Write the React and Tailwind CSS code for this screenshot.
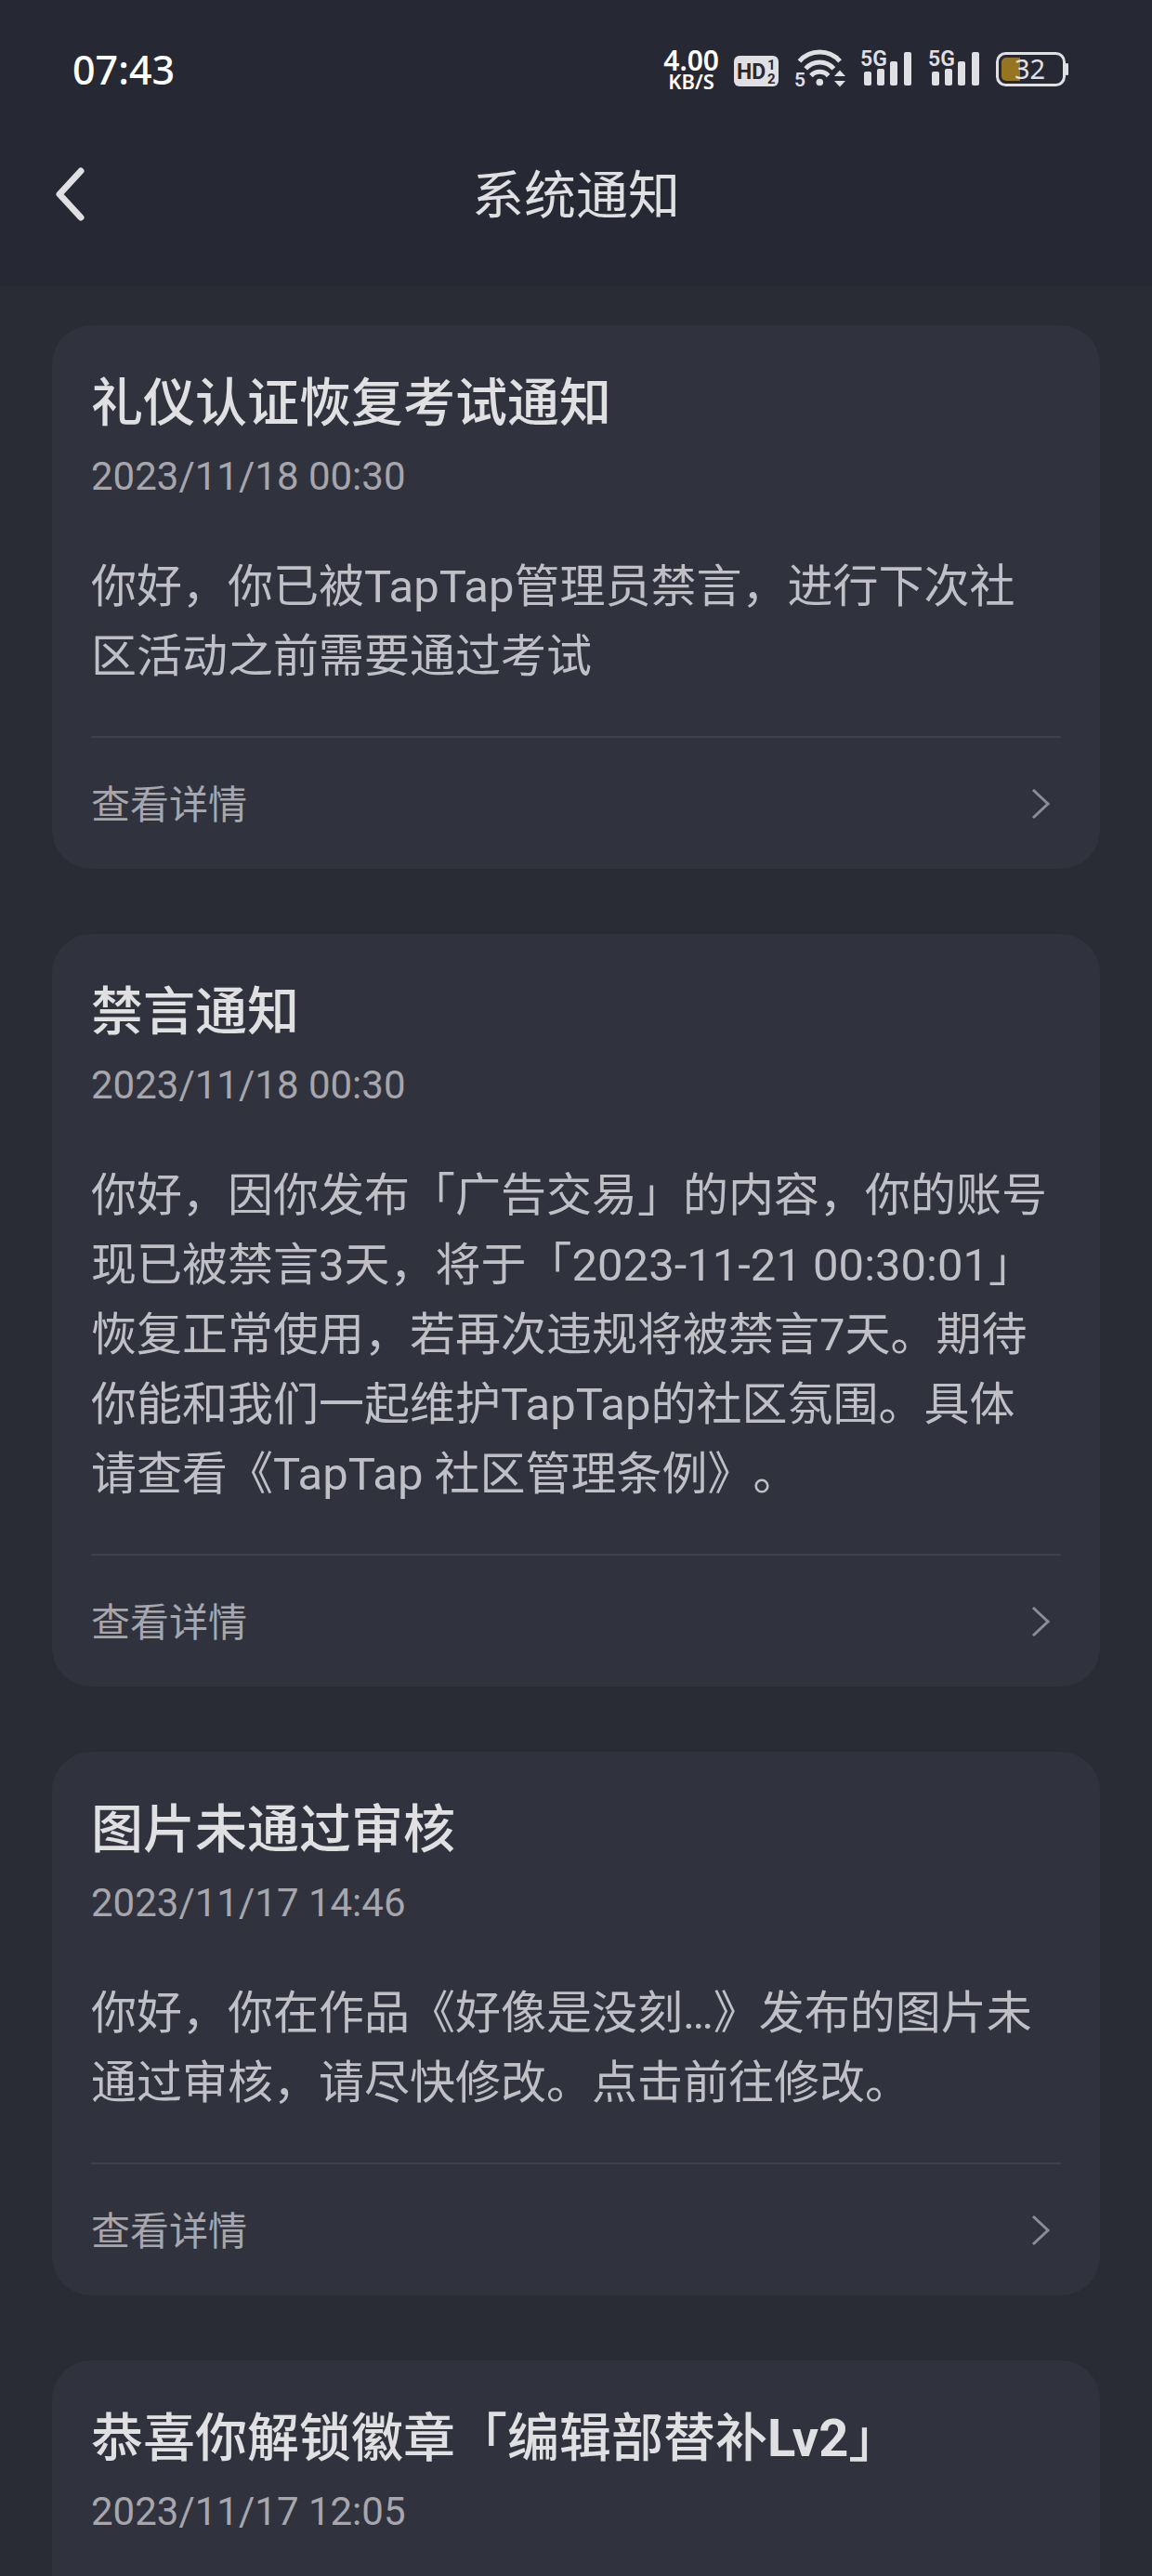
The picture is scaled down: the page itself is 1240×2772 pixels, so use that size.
const FONT = "font-[Roboto,'Noto_Sans_CJK_SC',sans-serif]";

const notices = [
  {
    id: 1,
    title: "礼仪认证恢复考试通知",
    time: "2023/11/18 00:30",
    body: "你好，你已被TapTap管理员禁言，进行下次社区活动之前需要通过考试",
    link: "查看详情",
  },
  {
    id: 2,
    title: "禁言通知",
    time: "2023/11/18 00:30",
    body: "你好，因你发布「广告交易」的内容，你的账号现已被禁言3天，将于「2023-11-21 00:30:01」恢复正常使用，若再次违规将被禁言7天。期待你能和我们一起维护TapTap的社区氛围。具体请查看《TapTap 社区管理条例》。",
    link: "查看详情",
  },
  {
    id: 3,
    title: "图片未通过审核",
    time: "2023/11/17 14:46",
    body: "你好，你在作品《好像是没刻…》发布的图片未通过审核，请尽快修改。点击前往修改。",
    link: "查看详情",
  },
  {
    id: 4,
    title: (
      <>
        恭喜你解锁徽章「编辑部替补<b className="font-bold">Lv2</b>」
      </>
    ),
    time: "2023/11/17 12:05",
  },
];

function HdIcon() {
  return (
    <svg width="50" height="44" viewBox="0 0 50 44" className="overflow-visible" aria-hidden="true">
      <rect x="0" y="7" width="48" height="33" rx="6" fill="#e0e0e4" />
      <g fill="#262833" fontFamily="Roboto, sans-serif" fontWeight="700">
        <text x="3" y="32" fontSize="23">HD</text>
        <text x="36" y="22" fontSize="15">1</text>
        <text x="36" y="37" fontSize="15">2</text>
      </g>
    </svg>
  );
}

function WifiIcon() {
  return (
    <svg width="54" height="44" viewBox="0 0 54 44" className="overflow-visible" aria-hidden="true">
      <g fill="none" stroke="#e0e0e4" strokeWidth="5">
        <path d="M4.500 12.800A29 29 0 0 1 48.100 12.800" />
        <path d="M11.200 20.800A20 20 0 0 1 41.400 20.800" />
        <path d="M17 28.500A12.500 12.500 0 0 1 35.600 28.500" />
      </g>
      <g fill="#e0e0e4">
        <circle cx="26.300" cy="35.500" r="3.800" />
        <path d="M48 22.500L54 29H42Z" />
        <path d="M42 34H54L48 40.500Z" />
        <text x="-1" y="40" fontSize="21" fontFamily="Roboto, sans-serif" fontWeight="600">5</text>
      </g>
    </svg>
  );
}

function SignalIcon() {
  return (
    <svg width="57" height="44" viewBox="0 0 57 44" fill="#e0e0e4" className="overflow-visible" aria-hidden="true">
      <text x="0" y="18" fontSize="23" fontFamily="Roboto, sans-serif" fontWeight="600">5G</text>
      <rect x="4" y="24" width="8" height="15" rx="2" />
      <rect x="18" y="21" width="8" height="18" rx="2" />
      <rect x="32" y="13" width="8" height="26" rx="2" />
      <rect x="47" y="3" width="8" height="36" rx="2" />
    </svg>
  );
}

function BatteryIcon() {
  return (
    <svg width="80" height="44" viewBox="0 0 80 44" className="overflow-visible" aria-hidden="true">
      <rect x="1.500" y="4.500" width="72" height="34" rx="9" fill="none" stroke="#e0e0e4" strokeWidth="3" />
      <path d="M26 9H11a5 5 0 0 0-5 5v15a5 5 0 0 0 5 5h15Z" fill="#967522" />
      <rect x="75" y="15" width="3" height="13" rx="1" fill="#e0e0e4" />
      <text x="20" y="32" fontSize="29" fontFamily="'Noto Sans', sans-serif" fill="#e0e0e4">32</text>
    </svg>
  );
}

function StatusBar() {
  return (
    <div className="flex h-[150px] items-center justify-between pl-[78px] pr-[88px] font-['Noto_Sans',sans-serif] text-white">
      <time className="text-[43px] leading-[60px] font-medium">07:43</time>
      <div className="flex items-center gap-4">
        <div className="text-center font-semibold">
          <p className="text-[30px] leading-6">4.00</p>
          <p className="text-[22px] leading-5">KB/S</p>
        </div>
        <HdIcon />
        <WifiIcon />
        <SignalIcon />
        <SignalIcon />
        <BatteryIcon />
      </div>
    </div>
  );
}

function NavBar() {
  return (
    <div className="grid h-[118px] grid-cols-[1fr_auto_1fr] items-center px-14">
      <button type="button" aria-label="返回" className="justify-self-start">
        <svg width="40" height="60" viewBox="0 0 40 60" fill="none" stroke="#e0e0e3" strokeWidth="7" strokeLinecap="round" strokeLinejoin="round" aria-hidden="true">
          <path d="M31 5L8 30L31 55" />
        </svg>
      </button>
      <h1 className="pt-1 text-[56px] leading-[80px] text-[#e0e0e3]">系统通知</h1>
    </div>
  );
}

function NoticeCard({ notice }) {
  return (
    <article className="min-h-[585px] shrink-0 rounded-[42px] bg-[#30323d] px-[42px] pt-11">
      <h2 className="text-[56px] leading-[80px] font-medium text-[#e0e0e3]">{notice.title}</h2>
      <time className="mt-[11px] block text-[42px] leading-[56px] text-[#a6a6ac]">{notice.time}</time>
      {notice.body && (
        <p className="mt-[53px] pr-1 pb-12 text-[49px] leading-[75px] text-[#bfbfc5] [text-spacing-trim:space-all]">
          {notice.body}
        </p>
      )}
      {notice.link && (
        <a
          href={`#notice-${notice.id}`}
          className="flex h-[143px] items-center justify-between border-t-2 border-[#3e3f4a] text-[42px] leading-[56px] text-[#a6a6ac]"
        >
          <span className="pt-1">{notice.link}</span>
          <svg width="42" height="42" viewBox="0 0 42 42" fill="none" stroke="#8c8d95" strokeWidth="3" aria-hidden="true">
            <path d="M12 6L28 21L12 36" />
          </svg>
        </a>
      )}
    </article>
  );
}

export default function App() {
  return (
    <div className={`${FONT} flex h-screen flex-col bg-[#292c34]`} lang="zh-CN">
      <header className="shrink-0 bg-[#262833] pb-10">
        <StatusBar />
        <NavBar />
      </header>
      <main className="flex min-h-0 flex-1 flex-col gap-[70px] overflow-y-auto px-14 pt-[42px] [scrollbar-width:none]">
        {notices.map((notice) => (
          <NoticeCard key={notice.id} notice={notice} />
        ))}
      </main>
    </div>
  );
}
